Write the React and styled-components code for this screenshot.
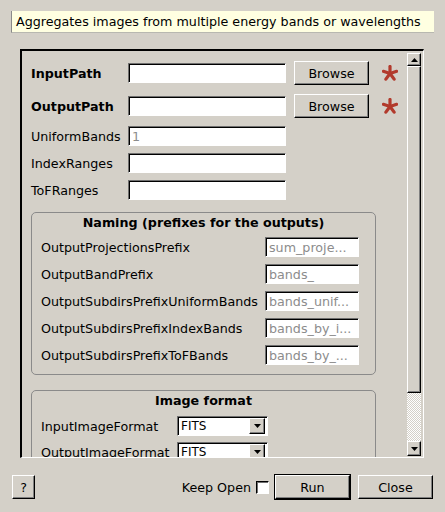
import React from "react";
import styled, { createGlobalStyle } from "styled-components";

const GlobalStyle = createGlobalStyle`
  html, body {
    margin: 0;
    padding: 0;
    background: #d4d0c8;
  }
  body {
    font-family: "DejaVu Sans", "Liberation Sans", sans-serif;
    font-size: 12.7px;
    color: #000;
  }
`;

const Window = styled.div`
  width: 445px;
  height: 512px;
  display: flex;
  flex-direction: column;
  background: #d4d0c8;
  overflow: hidden;
`;

const Tip = styled.div`
  margin: 11px 11px 0 11px;
  height: 22px;
  box-sizing: border-box;
  background: #ffffe1;
  border-left: 1px solid #8a8a8a;
  border-bottom: 1px solid #b8b8b0;
  padding-left: 4px;
  display: flex;
  align-items: center;
  white-space: nowrap;
`;

const Frame = styled.div`
  margin: 16px 21px 0 20px;
  height: 409px;
  box-sizing: border-box;
  display: flex;
  border-style: solid;
  border-width: 2px 1px 1px 2px;
  border-color: #000 #fff #fff #000;
`;

const Content = styled.div`
  flex: 1;
  overflow: hidden;
  padding: 9px 0 0 9px;
`;

const TopGrid = styled.div`
  display: grid;
  grid-template-columns: 89px 158px 75px 16px;
  grid-template-rows: 26px 26px 20px 20px 20px;
  column-gap: 8px;
  row-gap: 7px;
  align-items: center;
`;

const Label = styled.div`
  font-weight: ${(p) => (p.$bold ? "bold" : "normal")};
  white-space: nowrap;
`;

const Entry = styled.div`
  width: ${(p) => p.$w}px;
  height: 20px;
  box-sizing: border-box;
  background: #fff;
  border-style: solid;
  border-width: 1px;
  border-color: #6f6f6f #fff #fff #6f6f6f;
  box-shadow: inset 1px 1px 0 #000;
  padding-left: 3px;
  display: flex;
  align-items: center;
  color: #8c8c8c;
  white-space: nowrap;
  overflow: hidden;
`;

const Button = styled.div`
  width: ${(p) => p.$w}px;
  height: ${(p) => p.$h || 24}px;
  box-sizing: border-box;
  border-style: solid;
  border-width: 1px;
  border-color: #fff #000 #000 #fff;
  box-shadow: inset -1px -1px 0 #808080;
  display: flex;
  align-items: center;
  justify-content: center;
  background: #d4d0c8;
`;

const DefaultRing = styled.div`
  border: 1px solid #000;
  display: flex;
`;

const Star = styled.svg`
  margin-left: 5px;
`;

const Group = styled.div`
  width: 345px;
  box-sizing: border-box;
  border: 1px solid #8a8a8a;
  border-radius: 5px;
  padding: 0 16px 9px 9px;
  margin-top: ${(p) => p.$top}px;
`;

const GroupTitle = styled.div`
  height: 20px;
  line-height: 20px;
  text-align: center;
  font-weight: bold;
  margin-bottom: ${(p) => p.$gap}px;
  padding-left: 7px;
`;

const GroupGrid = styled.div`
  display: grid;
  grid-template-columns: ${(p) => p.$label}px ${(p) => p.$col}px;
  grid-auto-rows: ${(p) => p.$row}px;
  row-gap: ${(p) => p.$gap}px;
  align-items: center;
`;

const Select = styled.div`
  width: 91px;
  height: 20px;
  box-sizing: border-box;
  background: #fff;
  border-style: solid;
  border-width: 1px;
  border-color: #6f6f6f #fff #fff #6f6f6f;
  box-shadow: inset 1px 1px 0 #000;
  display: flex;
  align-items: center;
  justify-content: space-between;
  padding: 1px 2px 1px 3px;
  font-size: 12px;
`;

const ArrowBtn = styled.div`
  width: 16px;
  height: 16px;
  box-sizing: border-box;
  border-style: solid;
  border-width: 1px;
  border-color: #fff #000 #000 #fff;
  box-shadow: inset -1px -1px 0 #808080;
  background: #d4d0c8;
  display: flex;
  align-items: center;
  justify-content: center;
`;

const Scrollbar = styled.div`
  width: 18px;
  display: flex;
  flex-direction: column;
  padding: 2px 0 1px 2px;
  box-sizing: border-box;
`;

const ScrollBtn = styled.div`
  width: 14px;
  height: ${(p) => p.$h}px;
  box-sizing: border-box;
  border-style: solid;
  border-width: 1px;
  border-color: #fff #000 #000 #fff;
  box-shadow: inset -1px -1px 0 #808080;
  display: flex;
  align-items: center;
  justify-content: center;
`;

const Thumb = styled(ScrollBtn)`
  height: auto;
  flex: ${(p) => p.$size};
`;

const Trough = styled.div`
  width: 14px;
  flex: ${(p) => p.$size};
  background: repeating-conic-gradient(#fff 0 25%, #d4d0c8 0 50%) 0 0 / 2px 2px;
`;

const Footer = styled.div`
  margin: 16px 12px 0 12px;
  height: 26px;
  display: flex;
  align-items: center;
`;

const Spacer = styled.div`
  flex: 1;
`;

const KeepOpen = styled.div`
  display: flex;
  align-items: center;
  gap: 5px;
  margin-right: 5px;
`;

const Gap = styled.div`
  width: ${(p) => p.$w}px;
`;

const Check = styled.div`
  width: 13px;
  height: 13px;
  box-sizing: border-box;
  background: #fff;
  border-style: solid;
  border-width: 1px;
  border-color: #000 #fff #fff #000;
  box-shadow: inset 1px 1px 0 #6f6f6f;
`;

const Asterisk = () => (
  <Star width="16" height="16" viewBox="0 0 16 16">
    {[0, 72, 144, 216, 288].map((a) => (
      <line
        key={a}
        x1="8"
        y1="8.5"
        x2="8"
        y2="1.5"
        stroke="#b23a2c"
        strokeWidth="3.2"
        strokeLinecap="round"
        transform={`rotate(${a} 8 8.5)`}
      />
    ))}
  </Star>
);

const Tri = ({ up }) => (
  <svg width="7" height="4" viewBox="0 0 7 4">
    <polygon points={up ? "3.5,0 7,4 0,4" : "0,0 7,0 3.5,4"} fill="#000" />
  </svg>
);

const naming = [
  ["OutputProjectionsPrefix", "sum_proje..."],
  ["OutputBandPrefix", "bands_"],
  ["OutputSubdirsPrefixUniformBands", "bands_unif..."],
  ["OutputSubdirsPrefixIndexBands", "bands_by_i..."],
  ["OutputSubdirsPrefixToFBands", "bands_by_..."],
];

export default function App() {
  return (
    <Window>
      <GlobalStyle />
      <Tip>Aggregates images from multiple energy bands or wavelengths</Tip>
      <Frame>
        <Content>
          <TopGrid>
            <Label $bold>InputPath</Label>
            <Entry $w={158} />
            <Button $w={75}>Browse</Button>
            <Asterisk />
            <Label $bold>OutputPath</Label>
            <Entry $w={158} />
            <Button $w={75}>Browse</Button>
            <Asterisk />
            <Label>UniformBands</Label>
            <Entry $w={158}>1</Entry>
            <span />
            <span />
            <Label>IndexRanges</Label>
            <Entry $w={158} />
            <span />
            <span />
            <Label>ToFRanges</Label>
            <Entry $w={158} />
            <span />
            <span />
          </TopGrid>
          <Group $top={12}>
            <GroupTitle $gap={4}>Naming (prefixes for the outputs)</GroupTitle>
            <GroupGrid $label={224} $col={94} $row={20} $gap={7}>
              {naming.map(([label, value]) => (
                <React.Fragment key={label}>
                  <Label>{label}</Label>
                  <Entry $w={94}>{value}</Entry>
                </React.Fragment>
              ))}
            </GroupGrid>
          </Group>
          <Group $top={15}>
            <GroupTitle $gap={5}>Image format</GroupTitle>
            <GroupGrid $label={136} $col={91} $row={20} $gap={6}>
              <Label>InputImageFormat</Label>
              <Select>
                FITS
                <ArrowBtn>
                  <Tri />
                </ArrowBtn>
              </Select>
              <Label>OutputImageFormat</Label>
              <Select>
                FITS
                <ArrowBtn>
                  <Tri />
                </ArrowBtn>
              </Select>
            </GroupGrid>
          </Group>
        </Content>
        <Scrollbar>
          <ScrollBtn $h={13}>
            <Tri up />
          </ScrollBtn>
          <Thumb $size={326} />
          <Trough $size={48} />
          <ScrollBtn $h={15}>
            <Tri />
          </ScrollBtn>
        </Scrollbar>
      </Frame>
      <Footer>
        <Button $w={23}>?</Button>
        <Spacer />
        <KeepOpen>
          Keep Open
          <Check />
        </KeepOpen>
        <DefaultRing>
          <Button $w={75}>Run</Button>
        </DefaultRing>
        <Gap $w={7} />
        <Button $w={75}>Close</Button>
      </Footer>
    </Window>
  );
}
